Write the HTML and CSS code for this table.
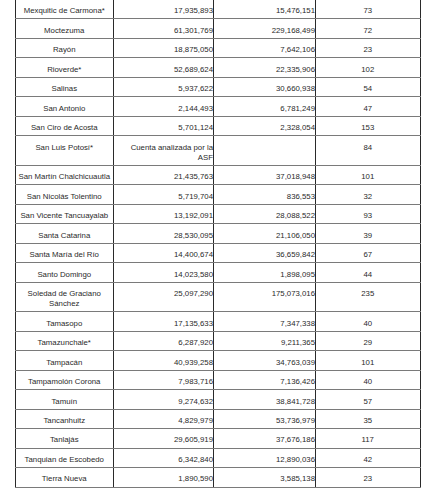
FILE: index.html
```html
<!DOCTYPE html>
<html lang="es">
<head>
<meta charset="utf-8">
<link rel="stylesheet" href="styles.css">
</head>
<body>
<div class="wrap">
<table class="data">
<colgroup><col class="c1"><col class="c2"><col class="c3"><col class="c4"></colgroup>
<tbody>
<tr><td class="name">Mexquitic de Carmona*</td><td class="num">17,935,893</td><td class="num">15,476,151</td><td class="cnt">73</td></tr>
<tr><td class="name">Moctezuma</td><td class="num">61,301,769</td><td class="num">229,168,499</td><td class="cnt">72</td></tr>
<tr><td class="name">Rayón</td><td class="num">18,875,050</td><td class="num">7,642,106</td><td class="cnt">23</td></tr>
<tr><td class="name">Rioverde*</td><td class="num">52,689,624</td><td class="num">22,335,906</td><td class="cnt">102</td></tr>
<tr><td class="name">Salinas</td><td class="num">5,937,622</td><td class="num">30,660,938</td><td class="cnt">54</td></tr>
<tr><td class="name">San Antonio</td><td class="num">2,144,493</td><td class="num">6,781,249</td><td class="cnt">47</td></tr>
<tr><td class="name">San Ciro de Acosta</td><td class="num">5,701,124</td><td class="num">2,328,054</td><td class="cnt">153</td></tr>
<tr><td class="name">San Luis Potosí*</td><td class="num">Cuenta analizada por la ASF</td><td class="num"></td><td class="cnt">84</td></tr>
<tr><td class="name">San Martín Chalchicuautla</td><td class="num">21,435,763</td><td class="num">37,018,948</td><td class="cnt">101</td></tr>
<tr><td class="name">San Nicolás Tolentino</td><td class="num">5,719,704</td><td class="num">836,553</td><td class="cnt">32</td></tr>
<tr><td class="name">San Vicente Tancuayalab</td><td class="num">13,192,091</td><td class="num">28,088,522</td><td class="cnt">93</td></tr>
<tr><td class="name">Santa Catarina</td><td class="num">28,530,095</td><td class="num">21,106,050</td><td class="cnt">39</td></tr>
<tr><td class="name">Santa María del Río</td><td class="num">14,400,674</td><td class="num">36,659,842</td><td class="cnt">67</td></tr>
<tr><td class="name">Santo Domingo</td><td class="num">14,023,580</td><td class="num">1,898,095</td><td class="cnt">44</td></tr>
<tr><td class="name">Soledad de Graciano Sánchez</td><td class="num">25,097,290</td><td class="num">175,073,016</td><td class="cnt">235</td></tr>
<tr><td class="name">Tamasopo</td><td class="num">17,135,633</td><td class="num">7,347,338</td><td class="cnt">40</td></tr>
<tr><td class="name">Tamazunchale*</td><td class="num">6,287,920</td><td class="num">9,211,365</td><td class="cnt">29</td></tr>
<tr><td class="name">Tampacán</td><td class="num">40,939,258</td><td class="num">34,763,039</td><td class="cnt">101</td></tr>
<tr><td class="name">Tampamolón Corona</td><td class="num">7,983,716</td><td class="num">7,136,426</td><td class="cnt">40</td></tr>
<tr><td class="name">Tamuín</td><td class="num">9,274,632</td><td class="num">38,841,728</td><td class="cnt">57</td></tr>
<tr><td class="name">Tancanhuitz</td><td class="num">4,829,979</td><td class="num">53,736,979</td><td class="cnt">35</td></tr>
<tr><td class="name">Tanlajás</td><td class="num">29,605,919</td><td class="num">37,676,186</td><td class="cnt">117</td></tr>
<tr><td class="name">Tanquian de Escobedo</td><td class="num">6,342,840</td><td class="num">12,890,036</td><td class="cnt">42</td></tr>
<tr><td class="name">Tierra Nueva</td><td class="num">1,890,590</td><td class="num">3,585,138</td><td class="cnt">23</td></tr>
</tbody>
</table>
</div>
</body>
</html>
```
FILE: styles.css
```css
html, body {
  margin: 0;
  padding: 0;
  background: #ffffff;
}
body {
  font-family: "Liberation Sans", Arial, sans-serif;
  color: #2a2a2a;
  overflow: hidden;
}
.wrap {
  padding-left: 14.5px;
  margin-top: 0;
}
.data {
  border-collapse: collapse;
  table-layout: fixed;
  width: 405px;
  font-size: 7.8px;
  line-height: 10px;
}
.c1 { width: 98.5px; }
.c2 { width: 100px; }
.c3 { width: 102px; }
.c4 { width: 104.5px; }
.data td {
  border-top: 1px solid #7a7a7a;
  border-bottom: 1px solid #7a7a7a;
  border-left: 1px solid #2a2a2a;
  border-right: 1px solid #2a2a2a;
  padding: 6.3px 0 2.2px 0;
  vertical-align: top;
}
.data tr:first-child td {
  border-top: none;
}
.name {
  text-align: center;
  padding-left: 2px !important;
  padding-right: 2px !important;
}
.num {
  text-align: right;
}
.cnt {
  text-align: center;
}
```
